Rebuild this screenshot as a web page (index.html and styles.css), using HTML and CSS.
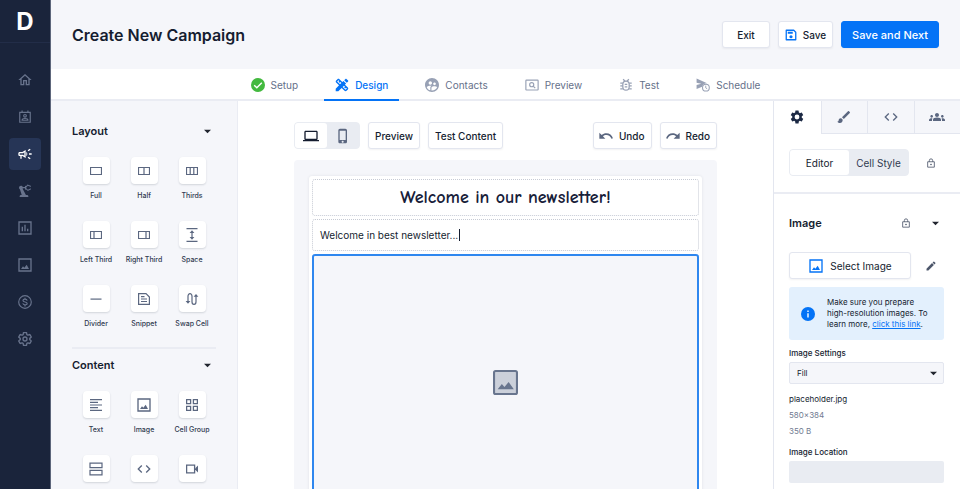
FILE: index.html
```html
<!DOCTYPE html>
<html lang="en">
<head>
<meta charset="utf-8">
<meta name="viewport" content="width=device-width, initial-scale=1">
<title>Create New Campaign</title>
<link rel="stylesheet" href="styles.css">
</head>
<body>
<svg class="sprite" aria-hidden="true">
  <symbol id="home" viewBox="0 0 24 24"><path d="M12 5.69l5 4.5V18h-2v-6H9v6H7v-7.81l5-4.5M12 3L2 12h3v8h6v-6h2v6h6v-8h3L12 3z"/></symbol>
  <symbol id="contact" viewBox="0 0 24 24"><g fill="none" stroke="currentColor" stroke-width="2"><path d="M3 4h18v17H3z"/><path d="M7 1v3M17 1v3"/><circle cx="12" cy="10" r="2.3"/><path d="M7 17.5c0-4 10-4 10 0z"/></g></symbol>
  <symbol id="megaphone" viewBox="0 0 24 24"><path fill-rule="evenodd" d="M18 11v2h4v-2h-4zm-2 6.61c.96.71 2.21 1.65 3.2 2.39.4-.53.8-1.07 1.2-1.6-.99-.74-2.24-1.68-3.2-2.4-.4.54-.8 1.08-1.2 1.61zM20.4 5.6c-.4-.53-.8-1.07-1.2-1.6-.99.74-2.24 1.68-3.2 2.4.4.53.8 1.07 1.2 1.6.96-.72 2.21-1.65 3.2-2.4zM4 9c-1.1 0-2 .9-2 2v2c0 1.1.9 2 2 2h1v4h2v-4h1l5 3V6L8 9H4zm5.03 1.71L11 9.53v4.94l-1.97-1.18-.48-.29H4v-2h4.55l.48-.29zM15.5 12c0-1.33-.58-2.53-1.5-3.35v6.69c.92-.81 1.5-2.01 1.5-3.34z"/></symbol>
  <symbol id="robot" viewBox="0 0 24 24"><path d="M19.93 8.35l-3.6 1.68L14 7.7V6.3l2.33-2.33 3.6 1.68c.38.18.82.01 1-.36.18-.38.01-.82-.36-1l-3.92-1.83c-.38-.18-.83-.1-1.13.2L13.78 4.4A.975.975 0 0 0 13 4c-.55 0-1 .45-1 1v1H8.82C8.4 4.84 7.3 4 6 4 4.34 4 3 5.34 3 7c0 1.1.6 2.05 1.48 2.58L7.08 18H6c-1.1 0-2 .9-2 2v1h13v-1c0-1.1-.9-2-2-2h-1.62L8.41 8.77c.17-.24.31-.49.41-.77H12v1c0 .55.45 1 1 1 .32 0 .6-.16.78-.4l1.74 1.74c.3.3.75.38 1.13.2l3.92-1.83c.38-.18.54-.62.36-1-.18-.37-.62-.54-1-.36z"/></symbol>
  <symbol id="chart" viewBox="0 0 24 24"><path fill="none" stroke="currentColor" stroke-width="2" d="M3 3h18v18H3zM8 17v-7M12 17V7M16 17v-4"/></symbol>
  <symbol id="image" viewBox="0 0 24 24"><path fill="none" stroke="currentColor" stroke-width="2" d="M3 3h18v18H3z"/><path d="M6 18l3-4 2 2 3.500-4.500L18 18z"/></symbol>
  <symbol id="dollar" viewBox="0 0 24 24"><g fill="none" stroke="currentColor" stroke-width="2"><circle cx="12" cy="12" r="10.800"/><path d="M12 4.500v2.500M12 17v2.500M15.700 9.500c-.5-3.200-7.200-3.200-7.200 0 0 3.200 7.200 1.800 7.200 5 0 3.200-6.900 3.200-7.400-.4"/></g></symbol>
  <symbol id="gear-line" viewBox="1.500 1.500 21 21"><path fill="none" stroke="currentColor" stroke-width="2" stroke-linejoin="round" d="M19.140 12.940c.04-.3.06-.61.06-.94 0-.32-.02-.64-.07-.94l2.030-1.580a.49.49 0 0 0 .12-.61l-1.920-3.320a.488.488 0 0 0-.59-.22l-2.390.96c-.5-.38-1.030-.7-1.620-.94l-.36-2.540a.484.484 0 0 0-.48-.41h-3.840c-.24 0-.43.17-.47.41l-.36 2.540c-.59.24-1.130.57-1.620.94l-2.390-.96a.49.49 0 0 0-.59.22L2.740 8.870c-.12.21-.08.47.12.61l2.030 1.580c-.05.3-.09.63-.09.94s.02.64.07.94l-2.030 1.580a.49.49 0 0 0-.12.61l1.920 3.320c.12.22.37.29.59.22l2.390-.96c.5.38 1.030.7 1.620.94l.36 2.540c.05.24.24.41.48.41h3.840c.24 0 .44-.17.47-.41l.36-2.540c.59-.24 1.130-.56 1.620-.94l2.390.96c.22.08.47 0 .59-.22l1.920-3.320c.12-.22.07-.47-.12-.61zM12 15a3 3 0 1 1 0-6 3 3 0 0 1 0 6z"/></symbol>
  <symbol id="gear" viewBox="1.500 1.500 21 21"><path d="M19.140 12.940c.04-.3.06-.61.06-.94 0-.32-.02-.64-.07-.94l2.030-1.580a.49.49 0 0 0 .12-.61l-1.920-3.320a.488.488 0 0 0-.59-.22l-2.390.96c-.5-.38-1.030-.7-1.620-.94l-.36-2.540a.484.484 0 0 0-.48-.41h-3.840c-.24 0-.43.17-.47.41l-.36 2.540c-.59.24-1.130.57-1.620.94l-2.390-.96a.49.49 0 0 0-.59.22L2.740 8.870c-.12.21-.08.47.12.61l2.030 1.580c-.05.3-.09.63-.09.94s.02.64.07.94l-2.030 1.580a.49.49 0 0 0-.12.61l1.920 3.320c.12.22.37.29.59.22l2.390-.96c.5.38 1.030.7 1.620.94l.36 2.540c.05.24.24.41.48.41h3.840c.24 0 .44-.17.47-.41l.36-2.540c.59-.24 1.130-.56 1.620-.94l2.390.96c.22.08.47 0 .59-.22l1.920-3.320c.12-.22.07-.47-.12-.61zM12 15.600a3.600 3.600 0 1 1 0-7.200 3.600 3.600 0 0 1 0 7.200z"/></symbol>
  <symbol id="save" viewBox="0 0 24 24"><path fill="none" stroke="currentColor" stroke-width="2.600" stroke-linejoin="round" d="M2.500 2.500h15l4 4v15h-19z"/><path d="M5.500 5.500h10v4h-10z"/><circle cx="12" cy="15.500" r="3.200"/></symbol>
  <symbol id="check" viewBox="0 0 24 24"><circle cx="12" cy="12" r="12"/><path fill="none" stroke="#fff" stroke-width="2.400" d="M5.500 12.500l4.500 4.200 8.500-8.700"/></symbol>
  <symbol id="design" viewBox="2 2 20 20"><path d="M16.240 11.510l1.570-1.570-3.750-3.750-1.570 1.570-4.140-4.130c-.78-.78-2.050-.78-2.830 0l-1.900 1.900c-.78.78-.78 2.050 0 2.830l4.130 4.130L3 17.250V21h3.750l4.760-4.760 4.130 4.130c.95.95 2.230.6 2.830 0l1.900-1.900c.78-.78.78-2.050 0-2.830l-4.130-4.130zm-7.060-.44L5.040 6.940l1.890-1.900L8.200 6.310 7.020 7.500l1.410 1.410 1.190-1.190 1.450 1.450-1.890 1.900zm7.880 7.890l-4.130-4.130 1.900-1.900 1.450 1.450-1.190 1.190 1.410 1.410 1.190-1.190 1.270 1.270-1.900 1.900zM20.710 7.040c.39-.39.39-1.020 0-1.410l-2.340-2.340c-.47-.47-1.120-.29-1.410 0l-1.830 1.830 3.750 3.750 1.830-1.830z"/></symbol>
  <symbol id="people" viewBox="2 2 20 20"><path d="M11.990 2c-5.520 0-10 4.480-10 10s4.480 10 10 10 10-4.480 10-10-4.480-10-10-10zm3.610 6.340c1.070 0 1.930.86 1.930 1.930 0 1.070-.86 1.930-1.930 1.930-1.070 0-1.930-.86-1.930-1.930-.01-1.070.86-1.930 1.930-1.930zm-6-1.580c1.300 0 2.360 1.060 2.360 2.360 0 1.300-1.060 2.360-2.360 2.360s-2.360-1.060-2.360-2.360c0-1.310 1.050-2.360 2.360-2.360zm0 9.130v3.750c-2.400-.75-4.300-2.600-5.140-4.960 1.050-1.120 3.670-1.690 5.140-1.690.53 0 1.200.08 1.900.22-1.640.87-1.900 2.020-1.900 2.680zM11.990 20c-.27 0-.53-.01-.79-.04v-4.070c0-1.420 2.940-2.130 4.400-2.130 1.070 0 2.920.39 3.840 1.150-1.170 2.970-4.060 5.090-7.450 5.090z"/></symbol>
  <symbol id="pageview" viewBox="0 0 24 24"><g fill="none" stroke="currentColor" stroke-width="2"><rect x="1.500" y="3.500" width="21" height="17" rx="1"/><circle cx="11.500" cy="11.500" r="3.500"/><path d="M14 14l3.500 3.500"/></g></symbol>
  <symbol id="bug" viewBox="1 1 22 22"><g fill="none" stroke="currentColor" stroke-width="2"><rect x="7" y="6" width="10" height="14" rx="5"/><path d="M3 9h4M3 13.500h4M3 18h4M17 9h4M17 13.500h4M17 18h4M7.500 3l3 3M16.500 3l-3 3M10 11h4M10 15h4"/></g></symbol>
  <symbol id="send-later" viewBox="0 0 24 24"><path d="M1 1l18 8c-5 0-8 3-8.500 6L1 19v-7l8-2-8-2z"/><circle cx="17" cy="16.500" r="5.800" fill="none" stroke="currentColor" stroke-width="1.800"/><path fill="none" stroke="currentColor" stroke-width="1.500" d="M16.700 13v4l2.500 1.500"/></symbol>
  <symbol id="laptop" viewBox="0 0 24 24"><path d="M20 18c1.100 0 2-.9 2-2V6c0-1.100-.9-2-2-2H4c-1.100 0-2 .9-2 2v10c0 1.100.9 2 2 2H0v2h24v-2h-4zM4 6h16v10H4V6z"/></symbol>
  <symbol id="phone" viewBox="0 0 24 24"><path d="M15.500 1h-8C6.120 1 5 2.120 5 3.500v17C5 21.880 6.120 23 7.500 23h8c1.380 0 2.500-1.120 2.500-2.500v-17C18 2.120 16.880 1 15.500 1zm-4 21c-.83 0-1.500-.67-1.500-1.500s.67-1.500 1.500-1.500 1.500.67 1.500 1.500-.67 1.500-1.500 1.500zm4.500-4H7V4h9v14z"/></symbol>
  <symbol id="undo" viewBox="0 0 24 24"><path d="M12.500 8c-2.650 0-5.050.99-6.900 2.600L2 7v9h9l-3.620-3.620c1.390-1.160 3.160-1.880 5.120-1.880 3.540 0 6.550 2.310 7.600 5.500l2.370-.78C21.080 11.030 17.150 8 12.500 8z"/></symbol>
  <symbol id="redo" viewBox="0 0 24 24"><path d="M18.400 10.600C16.550 8.990 14.150 8 11.500 8c-4.650 0-8.580 3.030-9.960 7.220L3.900 16c1.050-3.190 4.050-5.500 7.600-5.500 1.950 0 3.730.72 5.120 1.880L13 16h9V7l-3.600 3.600z"/></symbol>
  <symbol id="brush" viewBox="0 0 24 24"><path d="M7 14c-1.660 0-3 1.340-3 3 0 1.310-1.160 2-2 2 .92 1.220 2.490 2 4 2 2.210 0 4-1.790 4-4 0-1.660-1.340-3-3-3zm13.710-9.370l-1.340-1.340c-.39-.39-1.020-.39-1.410 0L9 12.250 11.750 15l8.960-8.960c.39-.39.39-1.020 0-1.410z"/></symbol>
  <symbol id="code" viewBox="0 0 24 24"><path d="M9.400 16.600L4.800 12l4.600-4.600L8 6l-6 6 6 6 1.400-1.400zm5.200 0l4.600-4.600-4.600-4.600L16 6l6 6-6 6-1.400-1.400z"/></symbol>
  <symbol id="groups" viewBox="0 0 24 24"><path d="M12 12.750c1.630 0 3.070.39 4.240.9 1.080.48 1.760 1.560 1.760 2.730V18H6v-1.610c0-1.180.68-2.260 1.760-2.730 1.170-.52 2.610-.91 4.240-.91zM4 13c1.100 0 2-.9 2-2s-.9-2-2-2-2 .9-2 2 .9 2 2 2zm1.130 1.100c-.37-.06-.74-.1-1.130-.1-.99 0-1.930.21-2.780.58C.48 14.900 0 15.620 0 16.430V18h4.500v-1.610c0-.83.23-1.610.63-2.290zM20 13c1.100 0 2-.9 2-2s-.9-2-2-2-2 .9-2 2 .9 2 2 2zm4 3.430c0-.81-.48-1.530-1.220-1.850-.85-.37-1.790-.58-2.780-.58-.39 0-.76.04-1.130.1.4.68.63 1.460.63 2.290V18H24v-1.570zM12 6c1.660 0 3 1.340 3 3s-1.340 3-3 3-3-1.340-3-3 1.340-3 3-3z"/></symbol>
  <symbol id="lock" viewBox="0 0 24 24"><path fill="none" stroke="currentColor" stroke-width="2" d="M4 9h16v13H4zM8 9V6a4 4 0 0 1 8 0v3"/><circle cx="12" cy="15.500" r="2"/></symbol>
  <symbol id="edit" viewBox="2 2 20 20"><path d="M3 17.250V21h3.750L17.810 9.940l-3.750-3.750L3 17.250zM20.710 7.040c.39-.39.39-1.020 0-1.410l-2.340-2.340c-.39-.39-1.020-.39-1.410 0l-1.830 1.830 3.750 3.750 1.830-1.830z"/></symbol>
  <symbol id="info" viewBox="0 0 24 24"><circle cx="12" cy="12" r="12"/><path fill="#fff" d="M10.800 10.500h2.400v7.500h-2.400zM10.800 6h2.400v2.500h-2.400z"/></symbol>
  <symbol id="caret" viewBox="0 0 12 12"><path d="M0 3h12L6 9z"/></symbol>
  <symbol id="full" viewBox="0 0 12 12"><path fill="none" stroke="currentColor" stroke-width="1.200" d="M.5 2.500h11v7H.5z"/></symbol>
  <symbol id="half" viewBox="0 0 12 12"><path fill="none" stroke="currentColor" stroke-width="1.200" d="M.5 2.500h11v7H.5zM6 2.500v7"/></symbol>
  <symbol id="thirds" viewBox="0 0 12 12"><path fill="none" stroke="currentColor" stroke-width="1.200" d="M.5 2.500h11v7H.5zM4.200 2.500v7M7.800 2.500v7"/></symbol>
  <symbol id="left-third" viewBox="0 0 12 12"><path fill="none" stroke="currentColor" stroke-width="1.200" d="M.5 2.500h11v7H.5zM4 2.500v7"/></symbol>
  <symbol id="right-third" viewBox="0 0 12 12"><path fill="none" stroke="currentColor" stroke-width="1.200" d="M.5 2.500h11v7H.5zM8 2.500v7"/></symbol>
  <symbol id="space" viewBox="0 0 14 14"><path fill="none" stroke="currentColor" stroke-width="1.200" d="M1.500 .7h11M1.500 13.300h11M7 4v6"/><path d="M7 2.300l2.400 2.600H4.600zM7 11.700l2.400-2.600H4.600z"/></symbol>
  <symbol id="divider" viewBox="0 0 12 12"><path d="M.5 5.500h11v1.200H.5z"/></symbol>
  <symbol id="snippet" viewBox="0 0 12 12"><path fill="none" stroke="currentColor" stroke-width="1.200" d="M.6 .6h7.400l3.400 3.400v7.400H.6zM3 3.600h3.500M3 6h6M3 8.500h6"/></symbol>
  <symbol id="swap" viewBox="0 0 14 14"><path fill="none" stroke="currentColor" stroke-width="1.200" d="M3 9.500V4.300c0-3.500 4-3.500 4 0v5.400c0 3.500 4 3.500 4 0V4"/><path d="M.6 9h4.800L3 11.700zM8.600 4.700h4.800L11 2z"/></symbol>
  <symbol id="text" viewBox="0 0 12 12"><path fill="none" stroke="currentColor" stroke-width="1.200" d="M0 .6h12M0 3.300h8M0 6h12M0 8.700h8M0 11.400h12"/></symbol>
  <symbol id="cells" viewBox="0 0 12 12"><path fill="none" stroke="currentColor" stroke-width="1.300" d="M.6 .6h4v4h-4zM7.400 .6h4v4h-4zM.6 7.400h4v4h-4zM7.400 7.400h4v4h-4z"/></symbol>
  <symbol id="rows" viewBox="0 0 14 14"><path fill="none" stroke="currentColor" stroke-width="1.200" d="M1 1.100h12v4.500H1zM1 8.400h12v4.500H1z"/></symbol>
  <symbol id="video" viewBox="0 0 12 12"><path fill="none" stroke="currentColor" stroke-width="1.300" d="M.6 2.100h8v7.800h-8z"/><path d="M9 5.500l3-3v7l-3-3z"/></symbol>
</svg>

<div class="app">
  <aside class="sidebar">
    <a class="logo" href="#">D</a>
    <nav class="nav" aria-label="Main">
      <a class="nav-item" href="#" aria-label="Home"><svg class="icon-l"><use href="#home"/></svg></a>
      <a class="nav-item" href="#" aria-label="Contacts"><svg class="icon-m"><use href="#contact"/></svg></a>
      <a class="nav-item active" href="#" aria-label="Campaigns"><svg class="icon-l"><use href="#megaphone"/></svg></a>
      <a class="nav-item" href="#" aria-label="Automation"><svg class="icon-l"><use href="#robot"/></svg></a>
      <a class="nav-item" href="#" aria-label="Reports"><svg class="icon-l"><use href="#chart"/></svg></a>
      <a class="nav-item" href="#" aria-label="Images"><svg class="icon-l"><use href="#image"/></svg></a>
      <a class="nav-item" href="#" aria-label="Billing"><svg class="icon-m"><use href="#dollar"/></svg></a>
      <a class="nav-item" href="#" aria-label="Settings"><svg class="icon-m"><use href="#gear-line"/></svg></a>
    </nav>
  </aside>

  <div class="page">
    <header class="header">
      <h1 class="title">Create New Campaign</h1>
      <div class="actions">
        <button class="btn btn-exit" type="button">Exit</button>
        <button class="btn btn-save" type="button"><svg class="icon-s blue"><use href="#save"/></svg>Save</button>
        <button class="btn btn-primary" type="button">Save and Next</button>
      </div>
    </header>

    <nav class="steps" aria-label="Steps">
      <a class="step" href="#"><svg class="icon-m green"><use href="#check"/></svg>Setup</a>
      <a class="step current" href="#" aria-current="step"><svg class="icon-m"><use href="#design"/></svg>Design</a>
      <a class="step" href="#"><svg class="icon-m muted"><use href="#people"/></svg>Contacts</a>
      <a class="step" href="#"><svg class="icon-m muted"><use href="#pageview"/></svg>Preview</a>
      <a class="step" href="#"><svg class="icon-m muted"><use href="#bug"/></svg>Test</a>
      <a class="step" href="#"><svg class="icon-m muted"><use href="#send-later"/></svg>Schedule</a>
    </nav>

    <div class="workspace">
      <section class="blocks" aria-label="Blocks">
        <div class="group">
          <h2 class="group-head">Layout <button class="plain" type="button" aria-label="Collapse Layout"><svg class="caret"><use href="#caret"/></svg></button></h2>
          <div class="tiles">
            <button class="block" type="button"><span class="tile"><svg class="icon-s"><use href="#full"/></svg></span>Full</button>
            <button class="block" type="button"><span class="tile"><svg class="icon-s"><use href="#half"/></svg></span>Half</button>
            <button class="block" type="button"><span class="tile"><svg class="icon-s"><use href="#thirds"/></svg></span>Thirds</button>
            <button class="block" type="button"><span class="tile"><svg class="icon-s"><use href="#left-third"/></svg></span>Left Third</button>
            <button class="block" type="button"><span class="tile"><svg class="icon-s"><use href="#right-third"/></svg></span>Right Third</button>
            <button class="block" type="button"><span class="tile"><svg class="icon-m"><use href="#space"/></svg></span>Space</button>
            <button class="block" type="button"><span class="tile"><svg class="icon-s"><use href="#divider"/></svg></span>Divider</button>
            <button class="block" type="button"><span class="tile"><svg class="icon-s"><use href="#snippet"/></svg></span>Snippet</button>
            <button class="block" type="button"><span class="tile"><svg class="icon-m"><use href="#swap"/></svg></span>Swap Cell</button>
          </div>
        </div>
        <div class="group">
          <h2 class="group-head">Content <button class="plain" type="button" aria-label="Collapse Content"><svg class="caret"><use href="#caret"/></svg></button></h2>
          <div class="tiles">
            <button class="block" type="button"><span class="tile"><svg class="icon-s"><use href="#text"/></svg></span>Text</button>
            <button class="block" type="button"><span class="tile"><svg class="icon-l"><use href="#image"/></svg></span>Image</button>
            <button class="block" type="button"><span class="tile"><svg class="icon-s"><use href="#cells"/></svg></span>Cell Group</button>
            <button class="block" type="button" aria-label="Rows"><span class="tile"><svg class="icon-m"><use href="#rows"/></svg></span></button>
            <button class="block" type="button" aria-label="Code"><span class="tile"><svg class="icon-l"><use href="#code"/></svg></span></button>
            <button class="block" type="button" aria-label="Video"><span class="tile"><svg class="icon-s"><use href="#video"/></svg></span></button>
          </div>
        </div>
      </section>

      <main class="editor">
        <div class="toolbar">
          <div class="segment devices">
            <button class="seg on" type="button" aria-label="Desktop"><svg class="icon-l"><use href="#laptop"/></svg></button>
            <button class="seg" type="button" aria-label="Mobile"><svg class="icon-l slate"><use href="#phone"/></svg></button>
          </div>
          <button class="btn" type="button">Preview</button>
          <button class="btn" type="button">Test Content</button>
          <span class="spacer"></span>
          <button class="btn btn-history" type="button"><svg class="icon-l slate"><use href="#undo"/></svg>Undo</button>
          <button class="btn btn-history" type="button"><svg class="icon-l slate"><use href="#redo"/></svg>Redo</button>
        </div>
        <div class="canvas">
          <article class="mail">
            <h2 class="cell cell-title">Welcome in our newsletter!</h2>
            <p class="cell cell-text"><span class="typing">Welcome in best newsletter...</span></p>
            <div class="cell-image">
              <svg class="placeholder" viewBox="0 0 24 24"><rect x="1" y="1" width="22" height="22" rx="1.500" fill="#cbd0da" stroke="#68758e" stroke-width="2"/><path fill="#68758e" d="M4.500 18.500l4-5 2.500 2.800 4-4.800 5 7z"/></svg>
            </div>
          </article>
        </div>
      </main>

      <aside class="props">
        <div class="prop-tabs">
          <button class="prop-tab on" type="button" aria-label="Settings"><svg class="icon-m"><use href="#gear"/></svg></button>
          <button class="prop-tab" type="button" aria-label="Style"><svg class="icon-l"><use href="#brush"/></svg></button>
          <button class="prop-tab" type="button" aria-label="Code"><svg class="icon-l"><use href="#code"/></svg></button>
          <button class="prop-tab" type="button" aria-label="Audience"><svg class="icon-l"><use href="#groups"/></svg></button>
        </div>
        <div class="mode">
          <div class="segment modes">
            <button class="seg on" type="button">Editor</button>
            <button class="seg" type="button">Cell Style</button>
          </div>
          <button class="plain tool" type="button" aria-label="Lock cell"><svg class="lock"><use href="#lock"/></svg></button>
        </div>
        <div class="prop-body">
          <h2 class="prop-head">Image
            <span class="head-tools">
              <button class="plain" type="button" aria-label="Lock image"><svg class="lock"><use href="#lock"/></svg></button>
              <button class="plain" type="button" aria-label="Collapse Image"><svg class="caret"><use href="#caret"/></svg></button>
            </span>
          </h2>
          <div class="pick">
            <button class="btn btn-pick" type="button"><svg class="icon-l blue"><use href="#image"/></svg>Select Image</button>
            <button class="plain tool" type="button" aria-label="Edit image"><svg class="pencil"><use href="#edit"/></svg></button>
          </div>
          <div class="note">
            <svg class="icon-m blue"><use href="#info"/></svg>
            <p>Make sure you prepare high-resolution images. To learn more, <a href="#">click this link</a>.</p>
          </div>
          <label class="label" for="fit">Image Settings</label>
          <div class="select">
            <select id="fit"><option>Fill</option><option>Fit</option></select>
            <svg class="caret"><use href="#caret"/></svg>
          </div>
          <ul class="file">
            <li class="file-name">placeholder.jpg</li>
            <li>580×384</li>
            <li>350 B</li>
          </ul>
          <label class="label" for="location">Image Location</label>
          <input class="field" id="location" type="text">
        </div>
      </aside>
    </div>
  </div>
</div>
</body>
</html>
```
FILE: styles.css
```css
:root {
  --navy: #1a243b;
  --ink: #151d30;
  --slate: #5b6780;
  --blue: #0473f6;
  --pale: #f5f6fa;
  --line: #eaecf3;
  --edge: #e3e6ef;
}

* { box-sizing: border-box; }

body {
  margin: 0;
  font: 10px/12px Inter, "Liberation Sans", sans-serif;
  color: var(--ink);
  background: #fff;
}

h1, h2, p, ul { margin: 0; padding: 0; }
ul { list-style: none; }
a { color: inherit; text-decoration: none; }
button, select, input { font: inherit; color: inherit; margin: 0; }
svg { display: block; flex: none; fill: currentColor; }

.sprite { position: absolute; width: 0; height: 0; }
.icon-s { width: 12px; height: 12px; }
.icon-m { width: 14px; height: 14px; }
.icon-l { width: 16px; height: 16px; }
.caret { width: 7px; height: 7px; color: #20242e; }
.lock { width: 10px; height: 10px; color: #4d576b; }
.pencil { width: 10px; height: 10px; color: #4d576b; }
.blue { color: var(--blue); }
.green { color: #43b93f; }
.muted { color: #98a1b5; }
.slate { color: var(--slate); }

.app { display: flex; height: 100vh; overflow: hidden; }

.sidebar {
  flex: none;
  width: 51px;
  background: var(--navy);
  border-right: 1px solid #5d667b;
}

.logo {
  display: flex;
  align-items: center;
  justify-content: center;
  height: 43px;
  padding-top: 1px;
  border-bottom: 1px solid #222d48;
  color: #fff;
  font-size: 24px;
  line-height: 28px;
  font-weight: 700;
}

.nav {
  display: flex;
  flex-direction: column;
  align-items: center;
  gap: 5px;
  padding-top: 21px;
}

.nav-item {
  display: flex;
  align-items: center;
  justify-content: center;
  width: 32px;
  height: 32px;
  border-radius: 4px;
  color: #68738c;
}

.nav-item.active { background: #263556; color: #fff; }

.page { flex: 1; min-width: 0; display: flex; flex-direction: column; }

.header {
  display: flex;
  align-items: center;
  justify-content: space-between;
  flex: none;
  height: 69px;
  padding: 0 21px;
  background: var(--pale);
}

.title { font-size: 16px; line-height: 24px; font-weight: 600; }
.actions { display: flex; gap: 8px; }

.btn {
  display: flex;
  align-items: center;
  justify-content: center;
  height: 27px;
  padding: 0 6px;
  border: 1px solid var(--edge);
  border-radius: 3px;
  background: #fff;
  box-shadow: 0 1px 2px rgba(26, 36, 59, .06);
  font-weight: 500;
  white-space: nowrap;
}

.btn-exit { padding: 0 14px; }
.btn-save { gap: 6px; }
.btn-primary {
  padding: 0 10px;
  border-color: var(--blue);
  background: var(--blue);
  color: #fff;
  font-size: 11px;
}

.steps {
  display: flex;
  justify-content: center;
  gap: 15px;
  flex: none;
  height: 32px;
  border-bottom: 2px solid var(--line);
}

.step {
  display: flex;
  align-items: center;
  gap: 6px;
  height: 32px;
  padding: 2px 11px 0;
  border-bottom: 2px solid transparent;
  color: #66718a;
}

.step.current {
  border-color: var(--blue);
  color: var(--blue);
  font-weight: 500;
}

.workspace { flex: 1; min-height: 0; display: flex; }

.blocks {
  flex: none;
  width: 187px;
  padding: 0 21px;
  overflow: hidden;
  background: var(--pale);
  border-right: 1px solid var(--line);
}

.group { padding-top: 22px; }
.group + .group { margin-top: 18px; padding-top: 8px; border-top: 2px solid var(--line); }

.group-head {
  display: flex;
  align-items: center;
  justify-content: space-between;
  padding-right: 5px;
  font-size: 11px;
  line-height: 16px;
  font-weight: 600;
}

.plain { padding: 0; border: 0; background: none; }

.tiles {
  display: grid;
  grid-template-columns: repeat(3, 1fr);
  gap: 20px 0;
  padding-top: 18px;
}

.block {
  display: flex;
  flex-direction: column;
  align-items: center;
  gap: 6px;
  height: 44px;
  padding: 0;
  border: 0;
  background: none;
  color: #303a50;
  font-size: 7px;
  line-height: 11px;
  font-weight: 500;
  white-space: nowrap;
}

.tile {
  display: flex;
  align-items: center;
  justify-content: center;
  flex: none;
  width: 27px;
  height: 27px;
  border-radius: 4px;
  background: #fff;
  box-shadow: 0 1px 2px rgba(26, 36, 59, .16);
  color: var(--slate);
}

.editor {
  flex: 1;
  min-width: 0;
  display: flex;
  flex-direction: column;
  gap: 11px;
  padding: 21px 56px 0;
}

.toolbar { display: flex; gap: 8px; flex: none; }
.spacer { flex: 1; }
.btn-history { gap: 5px; padding: 0 6px 0 4px; }

.segment {
  display: flex;
  height: 27px;
  border: 1px solid #e9ecf2;
  border-radius: 4px;
  background: #e9ecf2;
}

.seg {
  display: flex;
  align-items: center;
  justify-content: center;
  flex: 1;
  padding: 0;
  border: 0;
  border-radius: 3px;
  background: none;
  color: #303a50;
}

.seg.on { background: #fff; color: var(--ink); }
.devices { width: 66px; }
.modes { width: 120px; }

.canvas {
  flex: 1;
  min-height: 0;
  padding: 16px 15px 0;
  overflow: hidden;
  border-radius: 4px 4px 0 0;
  background: var(--pale);
}

.mail {
  display: flex;
  flex-direction: column;
  gap: 3px;
  padding: 3px;
  border-radius: 3px;
  background: #fff;
  box-shadow: 0 0 3px rgba(26, 36, 59, .1);
}

.cell {
  display: flex;
  align-items: center;
  flex: none;
  border: 1px dotted #c6cad4;
  border-radius: 3px;
}

.cell-title {
  justify-content: center;
  height: 37px;
  color: #172039;
  font: 700 18px/24px "Comic Sans MS", "Comic Neue", Lato, sans-serif;
}

.cell-text { height: 32px; padding: 0 7px; }
.typing { padding-right: 1px; border-right: 1px solid var(--ink); }

.cell-image {
  display: flex;
  align-items: center;
  justify-content: center;
  flex: none;
  height: 256px;
  border: 2px solid #2f87ef;
  border-radius: 3px;
  background: var(--pale);
}

.placeholder { width: 25px; height: 25px; }

.props {
  flex: none;
  width: 187px;
  overflow: hidden;
  border-left: 1px solid var(--edge);
}

.prop-tabs { display: grid; grid-template-columns: repeat(4, 1fr); }

.prop-tab {
  display: flex;
  align-items: center;
  justify-content: center;
  height: 33px;
  padding: 0;
  border: 0;
  border-left: 1px solid var(--edge);
  border-bottom: 1px solid var(--edge);
  background: var(--pale);
  color: var(--slate);
}

.prop-tab.on { border-left: 0; border-color: transparent; background: #fff; color: #1c2944; }

.mode, .pick { display: flex; }
.mode { gap: 8px; padding: 15px 16px 16px 15px; border-bottom: 2px solid var(--line); }
.tool { display: flex; align-items: center; justify-content: center; width: 27px; }

.prop-body { padding: 21px 16px 0 15px; }

.prop-head {
  display: flex;
  align-items: center;
  justify-content: space-between;
  padding-right: 5px;
  font-size: 11px;
  line-height: 16px;
  font-weight: 600;
}

.head-tools { display: flex; align-items: center; gap: 21px; }
.pick { gap: 6px; padding-top: 21px; }
.btn-pick { flex: 1; gap: 6px; font-weight: 400; }

.note {
  display: flex;
  align-items: center;
  gap: 12px;
  margin: 8px 0;
  padding: 10px 12px;
  border-radius: 3px;
  background: #e3f0fd;
  font-size: 8px;
  line-height: 11px;
}

.note a { color: var(--blue); text-decoration: underline; }

.label { display: block; font-size: 8px; line-height: 11px; font-weight: 500; }

.select { position: relative; margin-top: 3px; }

.select select {
  appearance: none;
  display: block;
  width: 100%;
  height: 22px;
  padding: 0 7px;
  border: 1px solid var(--edge);
  border-radius: 2px;
  background: var(--pale);
  font-size: 8px;
}

.select .caret { position: absolute; right: 7px; top: 8px; pointer-events: none; }

.file { padding: 7px 0 8px; color: #717b91; font-size: 8px; line-height: 16px; }
.file-name { color: var(--ink); }

.field {
  display: block;
  width: 100%;
  height: 22px;
  margin-top: 3px;
  padding: 0 7px;
  border: 0;
  border-radius: 2px;
  background: #e9ecf2;
  font-size: 8px;
}
```
